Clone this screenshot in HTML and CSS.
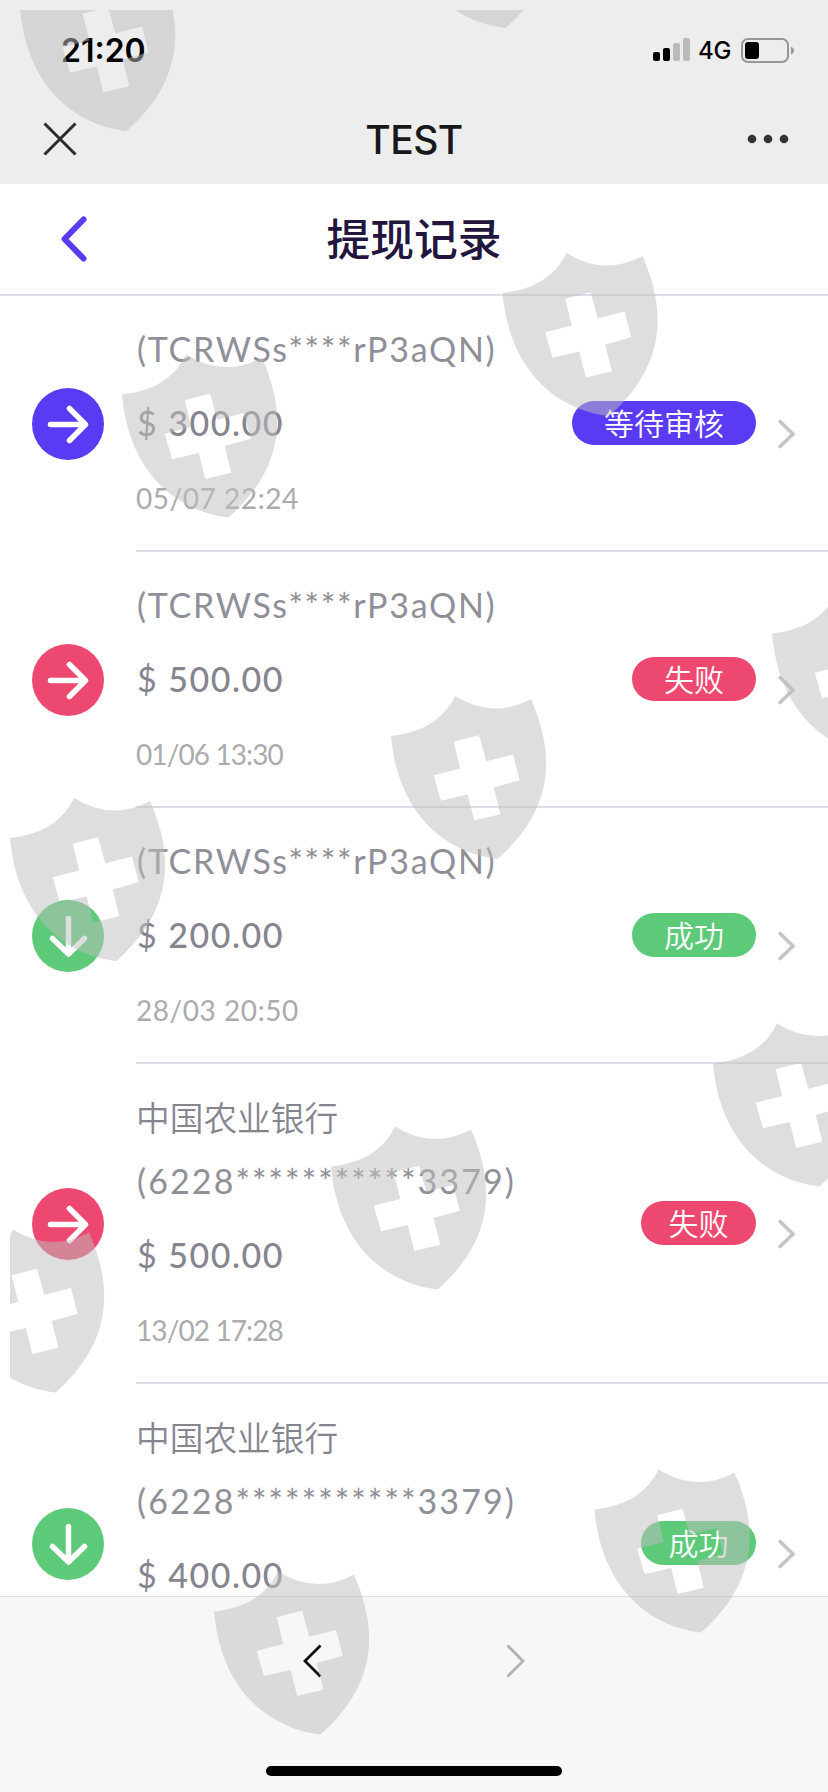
FILE: index.html
```html
<!DOCTYPE html>
<html lang="zh-CN">
<head>
<meta charset="utf-8">
<title>提现记录</title>
<link rel="stylesheet" href="styles.css">
</head>
<body>
<svg class="defs" aria-hidden="true">
  <symbol id="arrow-right" viewBox="0 0 72 72"><path d="M18.500 36.500H53M37.500 20.500L53.500 36.500L37.500 52.500"/></symbol>
  <symbol id="arrow-down" viewBox="0 0 72 72"><path d="M36.500 18.500V54M20.500 38.500L36.500 54L52.500 38.500"/></symbol>
  <symbol id="chevron" viewBox="0 0 20 32"><path d="M3 2.500L17 16L3 29.500"/></symbol>
  <symbol id="shield" viewBox="0 0 160 165" overflow="visible"><path fill-rule="evenodd" d="M0 40.500C22 38 50 30 64 .5Q102 24 140 3.500C162 54 167 110 106.500 163.500C58 158 7 122 0 40.500ZM62.700 46.300L88 39.700L95.300 65.700L122 59L128.700 84.700L102.700 92L109.300 118.700L83.300 125L76.700 99L50 105.300L42.700 79.700L69.300 73Z"/></symbol>
</svg>
<div class="screen">
  <header class="browser">
    <div class="status">
      <span class="clock">21:20</span>
      <div class="status-right">
        <svg class="signal" viewBox="0 0 37 24"><rect y="14" width="7" height="9" rx="2"/><rect x="10" y="10" width="7" height="13" rx="2"/><g fill="#bababa"><rect x="20" y="5" width="7" height="18" rx="2"/><rect x="30" width="7" height="23" rx="2"/></g></svg>
        <span class="network">4G</span>
        <svg class="battery" viewBox="0 0 53 25"><rect x="1" y="1" width="46" height="23" rx="6" fill="none" stroke="#969696" stroke-width="2"/><rect x="4" y="4" width="14" height="17" rx="3"/><path fill="#969696" d="M50 8.500Q53 10 53 12.500T50 16.500Z"/></svg>
      </div>
    </div>
    <div class="browser-bar">
      <svg class="close" viewBox="0 0 34 34"><path d="M1.500 1.500L32.500 32.500M32.500 1.500L1.500 32.500"/></svg>
      <span class="site">TEST</span>
      <svg class="more" viewBox="0 0 42 10"><circle cx="5" cy="5" r="4.300"/><circle cx="21" cy="5" r="4.300"/><circle cx="37" cy="5" r="4.300"/></svg>
    </div>
  </header>
  <div class="page-head">
    <svg class="back" viewBox="0 0 26 46"><path d="M22.500 3.500L3.500 23L22.500 42.500"/></svg>
    <h1>提现记录</h1>
  </div>
  <main class="list">
    <article class="row">
      <svg class="badge wait"><use href="#arrow-right"/></svg>
      <div class="body">
        <div class="info"><p class="account">(TCRWSs****rP3aQN)</p><p class="amount"><span>$</span> 300.00</p><p class="date">05/07 22:24</p></div>
        <span class="pill wait">等待审核</span><svg class="go"><use href="#chevron"/></svg>
      </div>
    </article>
    <article class="row">
      <svg class="badge fail"><use href="#arrow-right"/></svg>
      <div class="body">
        <div class="info"><p class="account">(TCRWSs****rP3aQN)</p><p class="amount"><span>$</span> 500.00</p><p class="date tight">01/06 13:30</p></div>
        <span class="pill fail">失败</span><svg class="go"><use href="#chevron"/></svg>
      </div>
    </article>
    <article class="row">
      <svg class="badge done"><use href="#arrow-down"/></svg>
      <div class="body">
        <div class="info"><p class="account">(TCRWSs****rP3aQN)</p><p class="amount"><span>$</span> 200.00</p><p class="date">28/03 20:50</p></div>
        <span class="pill done">成功</span><svg class="go"><use href="#chevron"/></svg>
      </div>
    </article>
    <article class="row bank-row">
      <svg class="badge fail"><use href="#arrow-right"/></svg>
      <div class="body">
        <div class="info"><p class="bank">中国农业银行</p><p class="account card">(6228***********3379)</p><p class="amount"><span>$</span> 500.00</p><p class="date tight">13/02 17:28</p></div>
        <span class="pill fail">失败</span><svg class="go"><use href="#chevron"/></svg>
      </div>
    </article>
    <article class="row bank-row">
      <svg class="badge done"><use href="#arrow-down"/></svg>
      <div class="body">
        <div class="info"><p class="bank">中国农业银行</p><p class="account card">(6228***********3379)</p><p class="amount"><span>$</span> 400.00</p></div>
        <span class="pill done">成功</span><svg class="go"><use href="#chevron"/></svg>
      </div>
    </article>
  </main>
  <footer class="toolbar">
    <nav class="history">
      <svg class="prev" viewBox="0 0 20 34"><path d="M17.500 1.500L2 17L17.500 32.500"/></svg>
      <svg class="next" viewBox="0 0 20 34"><path d="M2.500 1.500L18 17L2.500 32.500"/></svg>
    </nav>
    <div class="home"></div>
  </footer>
  <svg class="watermark" viewBox="10 10 818 1782">
    <use href="#shield" x="20" y="-32.500" width="160" height="165"/>
    <use href="#shield" x="399" y="-135.500" width="160" height="165"/>
    <use href="#shield" x="502.500" y="252.500" width="160" height="165"/>
    <use href="#shield" x="122" y="354" width="160" height="165"/>
    <use href="#shield" x="772" y="593" width="160" height="165"/>
    <use href="#shield" x="391" y="695.500" width="160" height="165"/>
    <use href="#shield" x="10" y="797.500" width="160" height="165"/>
    <use href="#shield" x="713" y="1023" width="160" height="165"/>
    <use href="#shield" x="331" y="1126" width="160" height="165"/>
    <use href="#shield" x="-51" y="1229" width="160" height="165"/>
    <use href="#shield" x="594.500" y="1469" width="160" height="165"/>
    <use href="#shield" x="214" y="1571" width="160" height="165"/>
  </svg>
</div>
</body>
</html>
```

FILE: styles.css
```css
* { box-sizing: border-box; }
body { margin: 0; background: #fff; font-family: Lato, "Noto Sans CJK SC", sans-serif; }
p, h1 { margin: 0; }
svg { display: block; flex: none; }
.defs { position: absolute; width: 0; height: 0; }
.screen { position: relative; display: flex; flex-direction: column; width: 828px; height: 1792px; overflow: hidden; }

.browser { height: 184px; flex: none; background: #ededed; font-family: Inter, sans-serif; }
.status { display: flex; align-items: center; justify-content: space-between; height: 94px; padding: 6px 34px 0 61px; }
.clock { padding-top: 1px; font-size: 32px; font-weight: 600; line-height: 40px; }
.status-right { display: flex; align-items: center; }
.signal { width: 37px; height: 24px; }
.network { width: 34px; margin: 2px 9px 0 8px; font-size: 24px; font-weight: 500; line-height: 28px; letter-spacing: -.3px; }
.battery { width: 53px; height: 25px; }
.browser-bar { display: grid; grid-template-columns: 1fr auto 1fr; align-items: center; height: 90px; padding: 0 39px 0 43px; }
.close { width: 34px; height: 34px; fill: none; stroke: #2c2c2c; stroke-width: 3; }
.site { margin-left: -4px; padding-top: 2px; font-size: 39px; font-weight: 500; line-height: 48px; letter-spacing: -.5px; color: #181818; }
.more { width: 42px; height: 10px; justify-self: end; fill: #333; }

.page-head { display: grid; grid-template-columns: 1fr auto 1fr; align-items: center; height: 112px; flex: none; padding: 0 61px; border-bottom: 2px solid #dddde8; }
.back { width: 26px; height: 46px; fill: none; stroke: #5a3af2; stroke-width: 6; stroke-linecap: round; stroke-linejoin: round; }
.page-head h1 { font-size: 43.800px; font-weight: 500; line-height: 60px; color: #22163f; }

.list { flex: 1; min-height: 0; overflow: hidden; }
.row { display: flex; align-items: center; height: 256px; padding-left: 32px; }
.bank-row { height: 320px; }
.badge { width: 72px; height: 72px; border-radius: 50%; fill: none; stroke: #fff; stroke-width: 5.500; stroke-linecap: round; stroke-linejoin: round; }
.body { display: flex; align-items: center; flex: 1; height: 100%; margin-left: 32px; padding-right: 32px; border-bottom: 2px solid #dddde8; }
.info { flex: 1; align-self: flex-start; padding-top: 22px; white-space: nowrap; }
.bank { font-size: 33.700px; font-weight: 350; line-height: 64px; color: #85858f; }
.account { padding-left: 1px; font-size: 34px; line-height: 62px; padding-bottom: 2px; letter-spacing: 1.750px; color: #8f8f99; }
.card { letter-spacing: 2.100px; }
.amount { padding-left: 1px; padding-bottom: 2px; font-size: 34px; font-weight: 500; line-height: 82px; letter-spacing: 1.500px; color: #85858f; }
.amount span { font-weight: 400; }
.date { font-size: 28px; line-height: 64px; letter-spacing: .55px; color: #ababae; }
.tight { letter-spacing: -.9px; }
.pill { display: flex; align-items: center; justify-content: center; height: 44px; min-width: 124px; padding: 0 32px 3px; border-radius: 22px; font-size: 30px; font-weight: 350; color: #fff; }
.bank-row .pill { min-width: 115px; padding: 0 27px 3px; }
.wait { background: #5a3af2; }
.fail { background: #ed4970; }
.done { background: #5dca7a; }
.go { width: 20px; height: 32px; margin: 22px 0 0 20px; fill: none; stroke: #c4c4c6; stroke-width: 3.500; }

.toolbar { display: flex; flex-direction: column; align-items: center; justify-content: space-between; height: 196px; flex: none; padding: 47px 0 16px; background: #f7f7f7; border-top: 1px solid #dedede; }
.history { display: flex; gap: 182px; }
.history svg { width: 20px; height: 34px; fill: none; stroke: #111; stroke-width: 2.800; }
.history .next { stroke: #b2b2b2; }
.home { width: 296px; height: 10px; border-radius: 5px; background: #000; }

.watermark { position: absolute; left: 10px; top: 10px; width: 818px; height: 1782px; fill: #bfbfbf; opacity: .5; overflow: hidden; pointer-events: none; }
```
